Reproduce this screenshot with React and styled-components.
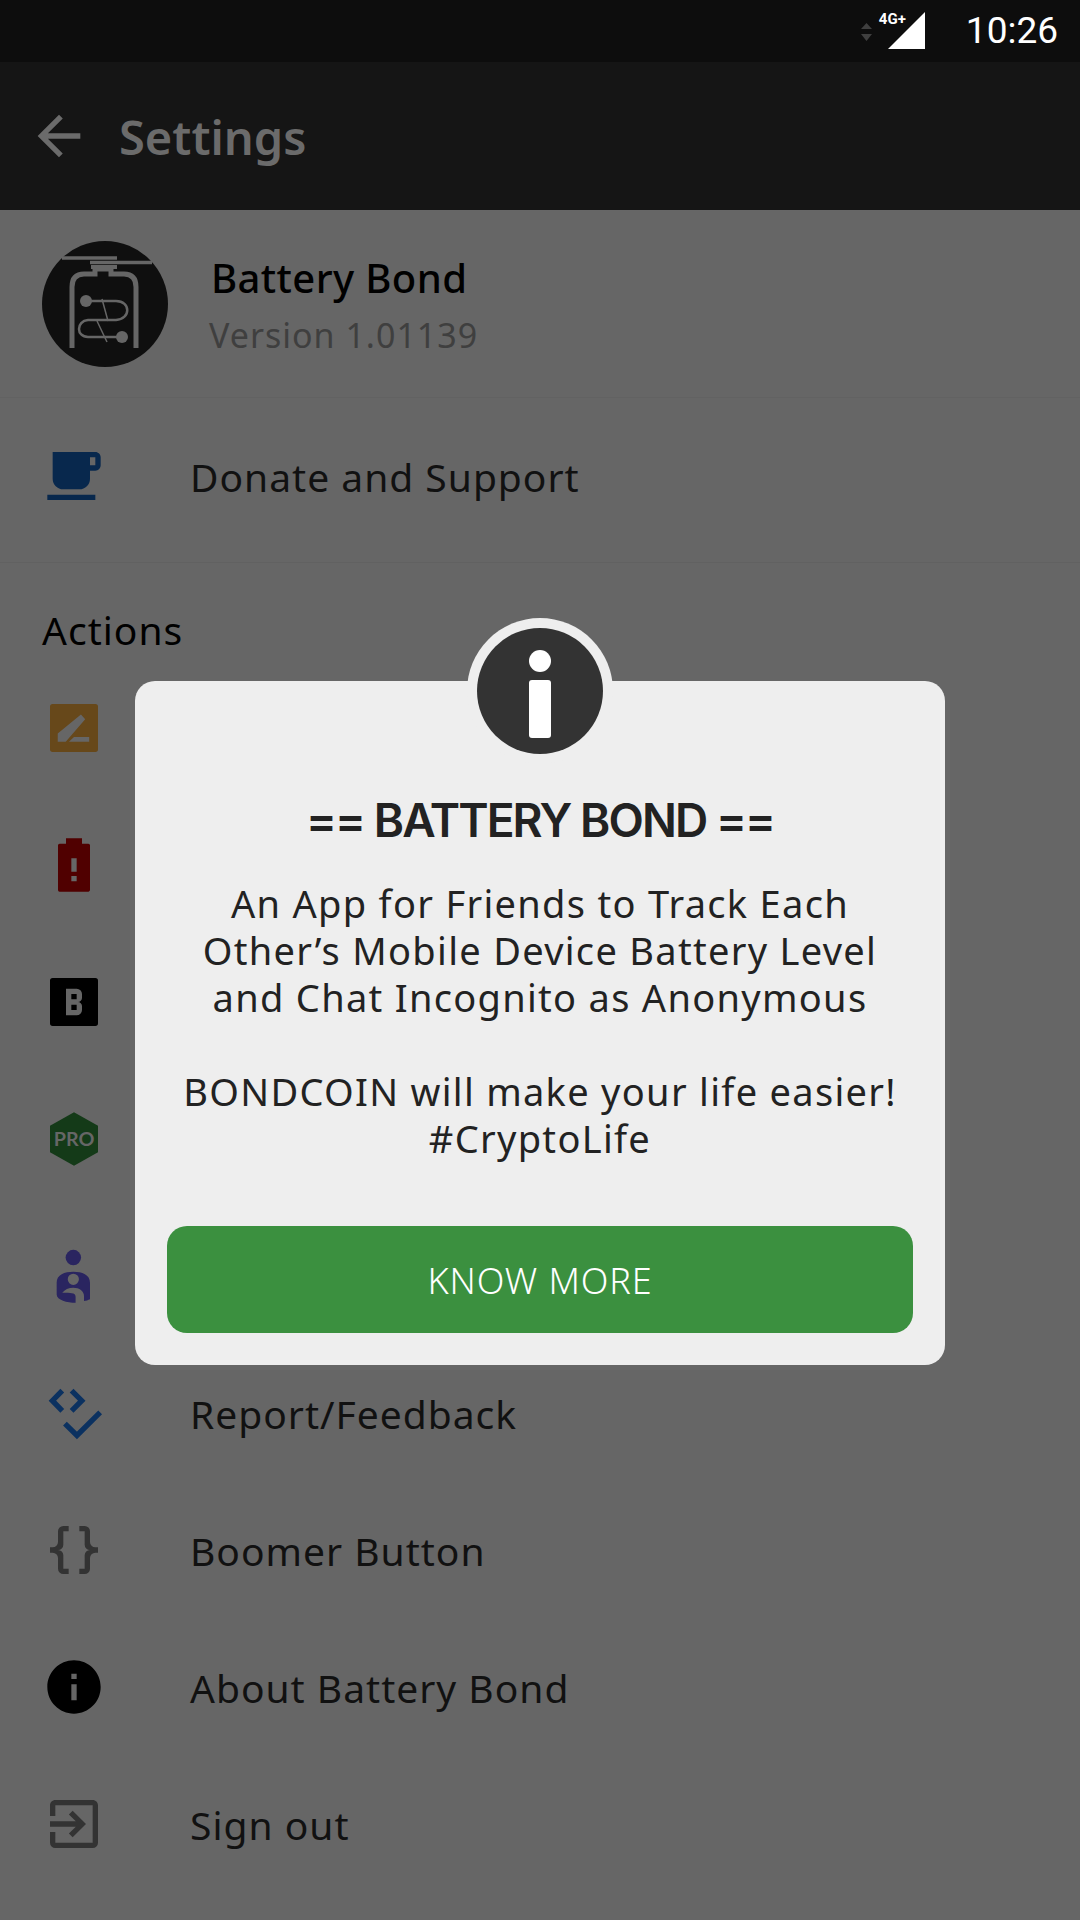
import styled, { createGlobalStyle } from "styled-components";

const Global = createGlobalStyle`
  html, body { margin: 0; padding: 0; background: #666; }
  body { font-family: "Noto Sans", "Open Sans", sans-serif; }
`;

const font = `"Noto Sans", "Open Sans", sans-serif`;

const Screen = styled.div`
  position: relative;
  width: 1080px;
  height: 1920px;
  overflow: hidden;
  background: #666;
`;

const StatusBar = styled.div`
  height: 62px;
  background: #0d0d0d;
  display: flex;
  justify-content: flex-end;
  align-items: center;
  padding-right: 22px;
  box-sizing: border-box;
`;

const NetArrows = styled.svg`
  width: 11px;
  height: 18px;
  margin-right: 16px;
  margin-top: 2px;
`;

const Signal = styled.div`
  position: relative;
  width: 38px;
  height: 38px;
  margin-right: 40px;
`;

const NetLabel = styled.span`
  position: absolute;
  left: -9px;
  top: -1px;
  font: 700 15px/17px "Roboto", sans-serif;
  color: #fff;
`;

const Clock = styled.span`
  font: 400 37px/44px "Roboto", sans-serif;
  color: #fff;
`;

const AppBar = styled.div`
  height: 148px;
  background: #151515;
  display: flex;
  align-items: center;
  padding-left: 27px;
`;

const Title = styled.h1`
  margin: 0 0 0 28px;
  padding-top: 2px;
  font: 600 47px/56px ${font};
  color: #6b6b6b;
`;

const Profile = styled.div`
  height: 188px;
  box-sizing: border-box;
  display: flex;
  align-items: center;
  padding: 0 0 0 42px;
  border-bottom: 1px solid #626262;
`;

const AppInfo = styled.div`
  margin-left: 43px;
  padding-top: 2px;
  display: flex;
  flex-direction: column;
  gap: 10px;
`;

const AppName = styled.div`
  font: 500 40px/50px ${font};
  letter-spacing: 0.4px;
  color: #000;
`;

const Version = styled.div`
  margin-left: -2px;
  font: 400 34px/44px ${font};
  letter-spacing: 1px;
  color: #3f3f3f;
`;

const Row = styled.div`
  height: ${(p) => p.$h || 137}px;
  box-sizing: border-box;
  display: flex;
  align-items: center;
  padding-left: 42px;
  padding-bottom: ${(p) => p.$pb || 0}px;
  ${(p) => p.$border && "border-bottom: 1px solid #616161;"}
`;

const Icon = styled.svg`
  width: 64px;
  height: 64px;
  flex: none;
  overflow: visible;
  fill: ${(p) => p.$c};
`;

const RowLabel = styled.span`
  margin-left: 84px;
  padding-top: 2px;
  font: 400 39px/50px ${font};
  letter-spacing: 1px;
  color: #111;
`;

const SectionTitle = styled.div`
  height: 96px;
  padding: 42px 0 0 42px;
  box-sizing: border-box;
  font: 400 39px/50px ${font};
  letter-spacing: 1px;
  color: #000;
`;

const Modal = styled.div`
  position: absolute;
  left: 135px;
  top: 681px;
  width: 810px;
  height: 684px;
  box-sizing: border-box;
  padding: 112px 32px 32px;
  background: #eee;
  border-radius: 20px;
  display: flex;
  flex-direction: column;
  align-items: center;
`;

const Badge = styled.div`
  position: absolute;
  left: 332px;
  top: -63px;
  width: 146px;
  height: 146px;
  border-radius: 50%;
  background: #eee;
  display: flex;
  align-items: center;
  justify-content: center;
`;

const BadgeInner = styled.div`
  width: 126px;
  height: 126px;
  border-radius: 50%;
  background: #333;
  display: flex;
  flex-direction: column;
  align-items: center;
  padding-top: 22px;
  box-sizing: border-box;
`;

const Dot = styled.div`
  width: 22px;
  height: 22px;
  border-radius: 50%;
  background: #fff;
`;

const Stem = styled.div`
  width: 22px;
  height: 58px;
  margin-top: 8px;
  border-radius: 3px;
  background: #fff;
`;

const ModalTitle = styled.h2`
  margin: 0;
  font: 600 46px/54px "Inter", ${font};
  letter-spacing: -1.9px;
  color: #222;
  text-align: center;
`;

const ModalBody = styled.p`
  margin: 33px 0 0;
  font: 400 38px/47px ${font};
  letter-spacing: 1.3px;
  color: #222;
  text-align: center;
  white-space: pre-line;
`;

const Button = styled.button`
  margin-top: auto;
  width: 100%;
  height: 107px;
  padding: 2px 0 0;
  border: none;
  border-radius: 20px;
  background: #3b903f;
  color: #fff;
  font: 300 36px/44px ${font};
  letter-spacing: 0.9px;
`;

const menu = [
  { label: "Report/Feedback", c: "none", kind: "report" },
  {
    label: "Boomer Button",
    c: "#333",
    d: "M8 3a2 2 0 0 0-2 2v4a2 2 0 0 1-2 2H3v2h1a2 2 0 0 1 2 2v4a2 2 0 0 0 2 2h2v-2H8v-5a2 2 0 0 0-2-2 2 2 0 0 0 2-2V5h2V3M16 3a2 2 0 0 1 2 2v4a2 2 0 0 0 2 2h1v2h-1a2 2 0 0 0-2 2v4a2 2 0 0 1-2 2h-2v-2h2v-5a2 2 0 0 1 2-2 2 2 0 0 1-2-2V5h-2V3h2z",
  },
  {
    label: "About Battery Bond",
    c: "#000",
    d: "M12 2C6.48 2 2 6.48 2 12s4.48 10 10 10 10-4.48 10-10S17.52 2 12 2zm1 15h-2v-6h2v6zm0-8h-2V7h2v2z",
  },
  {
    label: "Sign out",
    c: "#333",
    d: "M19 3H5c-1.11 0-2 .89-2 2v4h2V5h14v14H5v-4H3v4a2 2 0 0 0 2 2h14a2 2 0 0 0 2-2V5c0-1.11-.9-2-2-2zM10.08 15.58 11.5 17l5-5-5-5-1.42 1.41L12.67 11H3v2h9.67l-2.59 2.58z",
  },
];

function Logo() {
  return (
    <svg width="126" height="126" viewBox="0 0 126 126" style={{ flex: "none" }}>
      <circle cx="63" cy="63" r="63" fill="#0f0f0f" />
      <g fill="none" stroke="#666" strokeWidth="4">
        <path d="M20 17H75M48 21.500H110" strokeWidth="3.5" />
        <path d="M49 26H75" strokeWidth="4" />
        <path d="M30 107V46Q30 33 42 33H53V28H69V33H82Q94 33 94 46V107" strokeWidth="5" />
        <path d="M44 60H74C89 60 89 78 74 79H46C34 80 34 96 46 96H80" strokeWidth="2.5" />
        <path d="M60 58 66 80M55 80 65 101" strokeWidth="1.5" />
      </g>
      <circle cx="44" cy="60" r="6" fill="#666" />
      <circle cx="80" cy="96" r="6" fill="#666" />
    </svg>
  );
}

export default function App() {
  return (
    <Screen>
      <Global />
      <StatusBar>
        <NetArrows viewBox="0 0 11 18">
          <path d="M5.5 0 11 6H0zM0 11h11l-5.5 7z" fill="#3f3f3f" />
        </NetArrows>
        <Signal>
          <NetLabel>4G+</NetLabel>
          <svg width="38" height="38" viewBox="0 0 38 38">
            <path d="M37 0v37H0z" fill="#fff" />
          </svg>
        </Signal>
        <Clock>10:26</Clock>
      </StatusBar>

      <AppBar>
        <Icon viewBox="0 0 24 24" $c="#6b6b6b">
          <path d="M20 11H7.83l5.59-5.59L12 4l-8 8 8 8 1.41-1.41L7.83 13H20v-2z" />
        </Icon>
        <Title>Settings</Title>
      </AppBar>

      <Profile>
        <Logo />
        <AppInfo>
          <AppName>Battery Bond</AppName>
          <Version>Version 1.01139</Version>
        </AppInfo>
      </Profile>

      <Row $h={165} $pb={9} $border>
        <Icon viewBox="0 0 24 24" $c="#08284d">
          <path d="M20 3H4v10c0 2.21 1.79 4 4 4h6c2.21 0 4-1.79 4-4v-3h2c1.11 0 2-.9 2-2V5c0-1.11-.89-2-2-2zm0 5h-2V5h2v3zM2 21h18v-2H2v2z" />
        </Icon>
        <RowLabel>Donate and Support</RowLabel>
      </Row>

      <SectionTitle>Actions</SectionTitle>

      <Row>
        <Icon viewBox="0 0 24 24" $c="#67481a">
          <path
            fillRule="evenodd"
            d="M4 3h16a1 1 0 0 1 1 1v16a1 1 0 0 1-1 1H4a1 1 0 0 1-1-1V4a1 1 0 0 1 1-1zM5.900 17.200h3L16.200 8.700 14.600 6.900 5.900 14.100zM10.100 17.200h7.600v-1.800H12z"
          />
        </Icon>
      </Row>
      <Row>
        <Icon viewBox="0 0 24 24" $c="#500000">
          <path
            fillRule="evenodd"
            d="M9 2h6v2h2.400c.3 0 .6.3.6.6v16.800c0 .3-.3.6-.6.6H6.600a.6.6 0 0 1-.6-.6V4.600c0-.3.3-.6.6-.6H9zM11 9.500v5h2v-5zM11 16.100v2h2v-2z"
          />
        </Icon>
      </Row>
      <Row>
        <Icon viewBox="0 0 24 24" $c="#000">
          <path
            fillRule="evenodd"
            d="M20 3H4a1 1 0 0 0-1 1v16a1 1 0 0 0 1 1h16a1 1 0 0 0 1-1V4a1 1 0 0 0-1-1zM15 10.500c0 .8-.7 1.500-1.500 1.500.8 0 1.500.7 1.500 1.500V15a2 2 0 0 1-2 2H9V7h4a2 2 0 0 1 2 2zM11 9v2h2V9zM11 13v2h2v-2z"
          />
        </Icon>
      </Row>
      <Row>
        <Icon viewBox="0 0 24 24" $c="#143a18">
          <path d="M12 2 21 7V17L12 22 3 17V7z" />
          <text x="12" y="14.700" textAnchor="middle" fontFamily="Lato, sans-serif" fontWeight="700" fontSize="7.400" fill="#666">PRO</text>
        </Icon>
      </Row>
      <Row>
        <Icon viewBox="0 0 24 24" $c="#2a2560">
          <circle cx="11.750" cy="5.100" r="2.900" />
          <path
            fillRule="evenodd"
            d="M5.500 14.500C5.500 11.500 8.500 10.400 11.750 10.400S18 11.500 18 14.500V20.700C17.300 21 16.500 21.300 15.750 21.400V19.500C15.750 17.700 14 16.400 11.750 16.400 10 16.400 8.500 17.100 7.600 18.300 9.500 18.200 10.800 18.300 11.750 18.600 12.300 18.800 12.600 19.300 12.600 19.900V22C9.500 22 5.500 21 5.500 18.900ZM11.750 11.150a2.100 2.100 0 1 0 0 4.200 2.100 2.100 0 0 0 0-4.200z"
          />
        </Icon>
      </Row>

      {menu.map((m) => (
        <Row key={m.label}>
          <Icon viewBox="0 0 24 24" $c={m.c}>
            {m.kind === "report" ? (
              <g fill="none" stroke="#0b3160" strokeWidth="2">
                <path d="M7.600 3.600 3.900 7.400l3.700 3.800M11.100 3.600l3.800 3.800-3.800 3.800M8.600 16l4.500 4.400 8.700-8.600" />
              </g>
            ) : (
              <path d={m.d} />
            )}
          </Icon>
          <RowLabel>{m.label}</RowLabel>
        </Row>
      ))}

      <Modal>
        <Badge>
          <BadgeInner>
            <Dot />
            <Stem />
          </BadgeInner>
        </Badge>
        <ModalTitle>== BATTERY BOND ==</ModalTitle>
        <ModalBody>
          {"An App for Friends to Track Each\nOther’s Mobile Device Battery Level\nand Chat Incognito as Anonymous\n\nBONDCOIN will make your life easier!\n#CryptoLife"}
        </ModalBody>
        <Button>KNOW MORE</Button>
      </Modal>
    </Screen>
  );
}
